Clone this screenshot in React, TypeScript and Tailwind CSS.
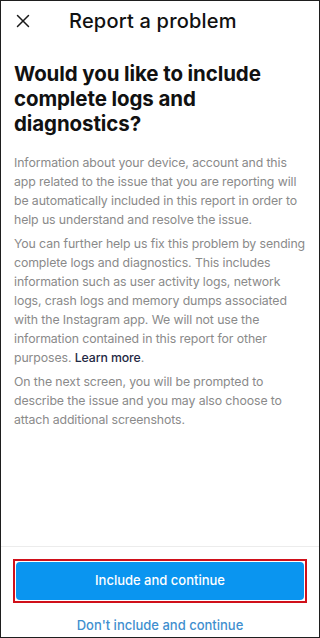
import { X } from 'lucide-react'

export default function App() {
  return (
    <div className="w-[320px] h-[638px] bg-white border border-[#1e1e1e] flex flex-col font-['Inter',sans-serif] overflow-hidden">
      <header className="h-[40px] flex items-center px-[11px] shrink-0">
        <X className="w-[22px] h-[22px] text-[#1a1a1a]" strokeWidth={1.6} />
        <div className="ml-[35px] text-[20px] font-medium text-[#111] tracking-[0.2px]">Report a problem</div>
      </header>

      <main className="flex-1 px-[13px] pt-[20px]">
        <h1 className="text-[20.5px] leading-[25px] font-bold text-[#111] tracking-[-0.1px]">
          Would you like to include
          <br />
          complete logs and
          <br />
          diagnostics?
        </h1>

        <div className="mt-[17px] text-[12.3px] leading-[19px] text-[#8a8a8a] tracking-[-0.1px] whitespace-nowrap space-y-[5px]">
          <p>
            Information about your device, account and this
            <br />
            app related to the issue that you are reporting will
            <br />
            be automatically included in this report in order to
            <br />
            help us understand and resolve the issue.
          </p>
          <p>
            You can further help us fix this problem by sending
            <br />
            complete logs and diagnostics. This includes
            <br />
            information such as user activity logs, network
            <br />
            logs, crash logs and memory dumps associated
            <br />
            with the Instagram app. We will not use the
            <br />
            information contained in this report for other
            <br />
            purposes. <span className="text-[#1f2a44] font-medium">Learn more</span>.
          </p>
          <p>
            On the next screen, you will be prompted to
            <br />
            describe the issue and you may also choose to
            <br />
            attach additional screenshots.
          </p>
        </div>
      </main>

      <footer className="shrink-0 border-t border-[#ececec] px-[12px] pt-[12px] pb-[2px]">
        <div className="border-2 border-[#d0101a] p-[1px]">
          <button className="w-full h-[38px] rounded-[4px] bg-[#0a95f0] text-white text-[13px] font-medium">
            Include and continue
          </button>
        </div>
        <div className="mt-[13px] text-center text-[13px] font-medium text-[#3f8fcf]">Don't include and continue</div>
      </footer>
    </div>
  )
}
